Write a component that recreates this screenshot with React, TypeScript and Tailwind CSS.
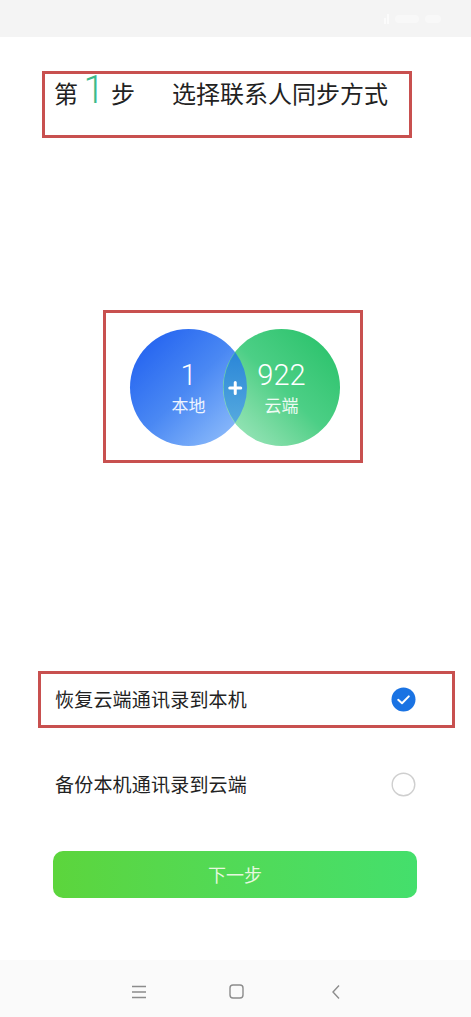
import * as React from 'react';

const cjk = { fontFamily: '"Noto Sans CJK SC", "Noto Sans", sans-serif' };
const num = { fontFamily: 'Roboto, "Noto Sans", sans-serif' };

function StatusBar() {
    return (
        <div className="h-[37px] bg-[#f4f4f4] flex items-center justify-end pr-[30px] gap-[6px]">
            {/* status icons, almost invisible white on light gray */}
            <div className="flex items-end gap-[1px] h-[10px]">
                <div className="w-[2px] h-[6px] bg-white/60" />
                <div className="w-[2px] h-[10px] bg-white/60" />
            </div>
            <div className="w-[24px] h-[8px] bg-white/40 rounded-sm" />
            <div className="w-[16px] h-[8px] bg-white/40 rounded-sm" />
        </div>
    );
}

function Venn() {
    return (
        <div className="relative flex pt-[16px] pl-[24px]">
            <div className="w-[117px] h-[117px] rounded-full bg-gradient-to-br from-[#1c58ef] via-[#4a88f3] to-[#9cc6fb] flex flex-col items-center justify-center text-white">
                <span style={num} className="text-[29px] leading-[32px] font-light">1</span>
                <span style={cjk} className="text-[17px] leading-[22px] mt-[3px] text-white/90">本地</span>
            </div>
            <div className="-ml-[24px] w-[117px] h-[117px] rounded-full bg-gradient-to-bl from-[#1fc066] via-[#4ccf86] to-[#a6e9c4] flex flex-col items-center justify-center text-white">
                <span style={num} className="text-[29px] leading-[32px] font-light">922</span>
                <span style={cjk} className="text-[17px] leading-[22px] mt-[3px] text-white/90">云端</span>
            </div>
            <svg
                className="absolute left-[24px] top-[16px]"
                width="211"
                height="117"
                viewBox="0 0 211 117"
            >
                <defs>
                    <linearGradient id="lens" x1="0" y1="0" x2="0" y2="1">
                        <stop offset="0" stopColor="#2a86d8" />
                        <stop offset="1" stopColor="#55a9de" />
                    </linearGradient>
                </defs>
                <path
                    d="M105.25 23.33 A58.5 58.5 0 0 1 105.25 93.67 A58.5 58.5 0 0 1 105.25 23.33 Z"
                    fill="url(#lens)"
                />
                <path d="M105.25 53.5 V64.5 M99.75 59 H110.75" stroke="white" strokeWidth="3" strokeLinecap="round" />
            </svg>
        </div>
    );
}

function CheckOn() {
    return (
        <svg width="25" height="25" viewBox="0 0 25 25">
            <circle cx="12.5" cy="12.5" r="12" fill="#1a73e3" />
            <path d="M7.2 12.8 L11 16.2 L17.8 9.4" fill="none" stroke="white" strokeWidth="2" strokeLinecap="round" strokeLinejoin="round" />
        </svg>
    );
}

function CheckOff() {
    return (
        <svg width="25" height="25" viewBox="0 0 25 25">
            <circle cx="12.5" cy="12.5" r="11.3" fill="none" stroke="#cfcfcf" strokeWidth="1.4" />
        </svg>
    );
}

export default function App() {
    return (
        <div className="w-[471px] h-[1017px] bg-white flex flex-col overflow-hidden" style={cjk}>
            <StatusBar />

            {/* Title */}
            <div className="mt-[34px] ml-[42px] w-[370px] h-[67px] border-[3px] border-[#c8504f] pl-[9px]">
                <div className="flex items-baseline text-[24px] leading-[32px] text-[#222]">
                    <span>第</span>
                    <span style={num} className="ml-[4px] w-[24px] text-center text-[38px] leading-[32px] font-light text-[#3dba8a]">1</span>
                    <span className="ml-[5px]">步</span>
                    <span className="ml-[37px]">选择联系人同步方式</span>
                </div>
            </div>

            {/* Venn */}
            <div className="mt-[172px] ml-[103px] w-[260px] h-[153px] border-[3px] border-[#c8504f]">
                <Venn />
            </div>

            {/* Options */}
            <div className="mt-[208px] ml-[38px] w-[417px] h-[57px] border-[3px] border-[#c8504f] flex items-center pl-[14px] pr-[36px]">
                <span className="flex-1 text-[19px] tracking-[0.2px] text-[#222]">恢复云端通讯录到本机</span>
                <CheckOn />
            </div>
            <div className="mt-[28px] ml-[38px] w-[417px] h-[57px] flex items-center pl-[17px] pr-[39px]">
                <span className="flex-1 text-[19px] tracking-[0.2px] text-[#222]">备份本机通讯录到云端</span>
                <CheckOff />
            </div>

            {/* Next */}
            <button className="mt-[38px] ml-[53px] w-[364px] h-[47px] rounded-[10px] bg-gradient-to-r from-[#5cd53c] to-[#44df6c] text-[18px] text-[#e6f8df]">
                下一步
            </button>

            <div className="flex-1" />

            {/* Nav bar */}
            <div className="h-[57px] bg-[#fafafa] flex items-center justify-center pt-[6px]">
                <svg width="16" height="14" viewBox="0 0 16 14">
                    <path d="M1 1.5 H15 M1 7 H15 M1 12.5 H15" stroke="#8c8c8c" strokeWidth="1.3" />
                </svg>
                <svg width="15" height="15" viewBox="0 0 15 15" className="ml-[82px]">
                    <rect x="1" y="1" width="13" height="13" rx="3" fill="none" stroke="#8c8c8c" strokeWidth="1.4" />
                </svg>
                <svg width="10" height="16" viewBox="0 0 10 16" className="ml-[87px]">
                    <path d="M8 1.5 L2 8 L8 14.5" fill="none" stroke="#8c8c8c" strokeWidth="1.4" />
                </svg>
            </div>
        </div>
    );
}
